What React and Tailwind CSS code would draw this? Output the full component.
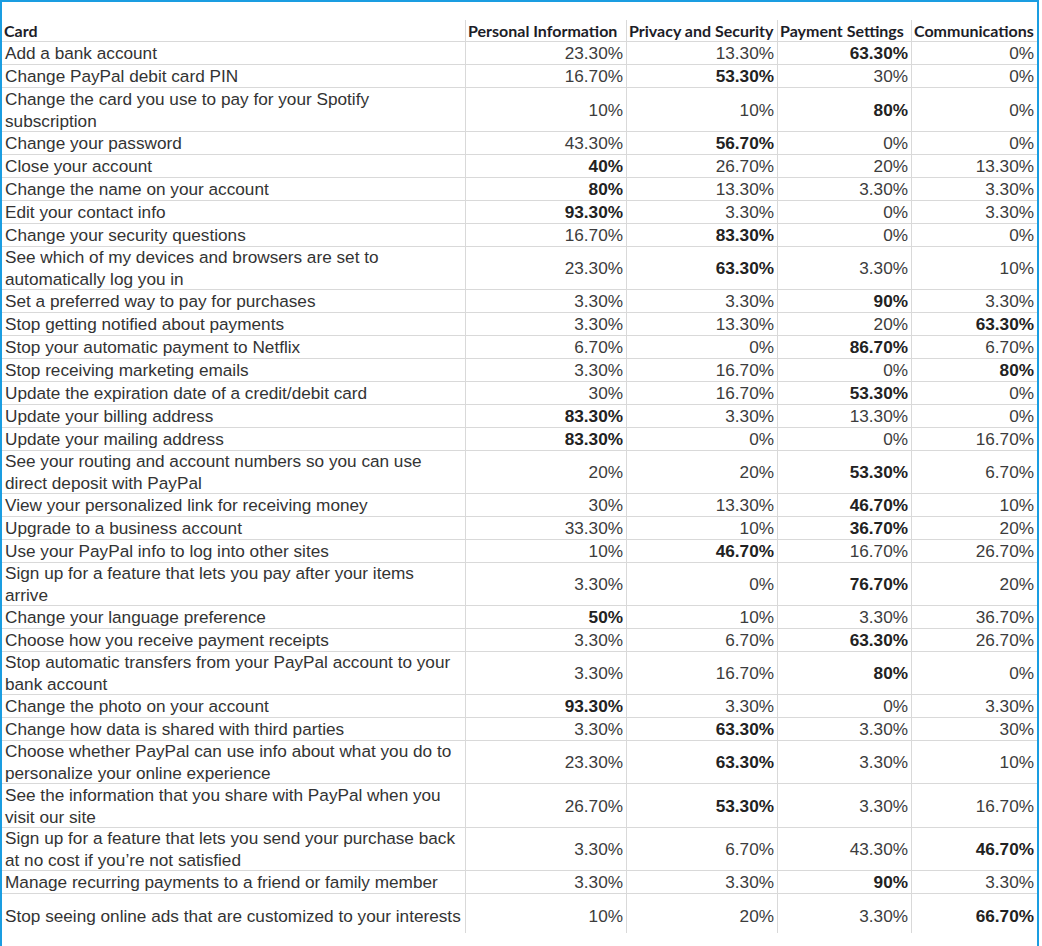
import React from 'react';

// [lines of the card text, four values, index of the bold value, row height]
const rows = [
  [['Add a bank account'], ['23.30%', '13.30%', '63.30%', '0%'], 2],
  [['Change PayPal debit card PIN'], ['16.70%', '53.30%', '30%', '0%'], 1],
  [['Change the card you use to pay for your Spotify', 'subscription'], ['10%', '10%', '80%', '0%'], 2, 44],
  [['Change your password'], ['43.30%', '56.70%', '0%', '0%'], 1],
  [['Close your account'], ['40%', '26.70%', '20%', '13.30%'], 0],
  [['Change the name on your account'], ['80%', '13.30%', '3.30%', '3.30%'], 0],
  [['Edit your contact info'], ['93.30%', '3.30%', '0%', '3.30%'], 0],
  [['Change your security questions'], ['16.70%', '83.30%', '0%', '0%'], 1],
  [['See which of my devices and browsers are set to', 'automatically log you in'], ['23.30%', '63.30%', '3.30%', '10%'], 1],
  [['Set a preferred way to pay for purchases'], ['3.30%', '3.30%', '90%', '3.30%'], 2],
  [['Stop getting notified about payments'], ['3.30%', '13.30%', '20%', '63.30%'], 3],
  [['Stop your automatic payment to Netflix'], ['6.70%', '0%', '86.70%', '6.70%'], 2],
  [['Stop receiving marketing emails'], ['3.30%', '16.70%', '0%', '80%'], 3],
  [['Update the expiration date of a credit/debit card'], ['30%', '16.70%', '53.30%', '0%'], 2],
  [['Update your billing address'], ['83.30%', '3.30%', '13.30%', '0%'], 0],
  [['Update your mailing address'], ['83.30%', '0%', '0%', '16.70%'], 0],
  [['See your routing and account numbers so you can use', 'direct deposit with PayPal'], ['20%', '20%', '53.30%', '6.70%'], 2],
  [['View your personalized link for receiving money'], ['30%', '13.30%', '46.70%', '10%'], 2],
  [['Upgrade to a business account'], ['33.30%', '10%', '36.70%', '20%'], 2],
  [['Use your PayPal info to log into other sites'], ['10%', '46.70%', '16.70%', '26.70%'], 1],
  [['Sign up for a feature that lets you pay after your items', 'arrive'], ['3.30%', '0%', '76.70%', '20%'], 2],
  [['Change your language preference'], ['50%', '10%', '3.30%', '36.70%'], 0],
  [['Choose how you receive payment receipts'], ['3.30%', '6.70%', '63.30%', '26.70%'], 2],
  [['Stop automatic transfers from your PayPal account to your', 'bank account'], ['3.30%', '16.70%', '80%', '0%'], 2],
  [['Change the photo on your account'], ['93.30%', '3.30%', '0%', '3.30%'], 0],
  [['Change how data is shared with third parties'], ['3.30%', '63.30%', '3.30%', '30%'], 1],
  [['Choose whether PayPal can use info about what you do to', 'personalize your online experience'], ['23.30%', '63.30%', '3.30%', '10%'], 1],
  [['See the information that you share with PayPal when you', 'visit our site'], ['26.70%', '53.30%', '3.30%', '16.70%'], 1, 44],
  [['Sign up for a feature that lets you send your purchase back', 'at no cost if you\u2019re not satisfied'], ['3.30%', '6.70%', '43.30%', '46.70%'], 3],
  [['Manage recurring payments to a friend or family member'], ['3.30%', '3.30%', '90%', '3.30%'], 2],
  [['Stop seeing online ads that are customized to your interests'], ['10%', '20%', '3.30%', '66.70%'], 3],
];

const headers = ['Card', 'Personal Information', 'Privacy and Security', 'Payment Settings', 'Communications'];

const rowHeight = (lines, last, tall) => {
  if (last) return 'h-[39px] pt-[4px]';
  if (tall === 44) return 'h-[44px] border-b';
  return lines.length > 1 ? 'h-[43px] border-b' : 'h-[23px] border-b';
};

export default function App() {
  return (
    <div className="w-[1042px] h-[946px] bg-white">
      <div className="w-[1039px] h-[946px] border-l-2 border-t-2 border-r-2 border-[#1a9de1] pt-[18px]">
        <div className="grid grid-cols-[464px_161px_151px_134px_125px] font-['Liberation_Sans',Arial,sans-serif] text-[17.2px] leading-[22px] text-[#333]">
          {headers.map((h, i) => (
            <div
              key={h}
              className={
                'h-[22px] border-b border-[#d9d9d9] flex items-center whitespace-nowrap overflow-hidden font-[Lato,sans-serif] font-bold text-[16px] text-[#1d1d28] leading-[20px] ' +
                (i < 4 ? 'pl-[2px] border-r' : 'pl-[2px]')
              }
            >
              {h}
            </div>
          ))}

          {rows.map(([lines, values, bold, tall], r) => {
            const last = r === rows.length - 1;
            const h = rowHeight(lines, last, tall);
            return (
              <React.Fragment key={r}>
                <div className={'border-r border-[#d9d9d9] pl-[3px] flex flex-col justify-center whitespace-nowrap ' + h}>
                  {lines.map((l) => (
                    <span key={l} className="block">{l}</span>
                  ))}
                </div>
                {values.map((v, c) => (
                  <div
                    key={c}
                    className={
                      'border-[#d9d9d9] flex items-center justify-end pr-[3px] whitespace-nowrap ' +
                      h +
                      (c < 3 ? ' border-r' : '') +
                      (c === bold ? ' font-bold text-[#222]' : ' text-[#3c3c3c]')
                    }
                  >
                    {v}
                  </div>
                ))}
              </React.Fragment>
            );
          })}
        </div>
      </div>
    </div>
  );
}
